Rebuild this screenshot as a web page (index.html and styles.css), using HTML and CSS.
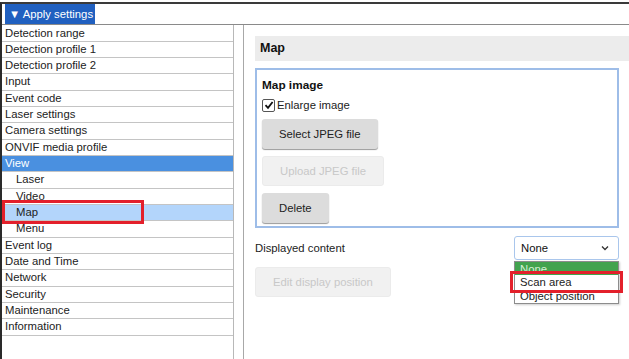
FILE: index.html
```html
<!DOCTYPE html>
<html>
<head>
<meta charset="utf-8">
<link rel="stylesheet" href="styles.css">
</head>
<body>
<div class="frame">
  <div class="topbar">
    <div class="apply">▼ Apply settings</div>
  </div>
  <div class="main">
    <div class="sidebar">
      <div class="item">Detection range</div>
      <div class="item">Detection profile 1</div>
      <div class="item">Detection profile 2</div>
      <div class="item">Input</div>
      <div class="item">Event code</div>
      <div class="item">Laser settings</div>
      <div class="item">Camera settings</div>
      <div class="item">ONVIF media profile</div>
      <div class="item active">View</div>
      <div class="item sub">Laser</div>
      <div class="item sub">Video</div>
      <div class="item sub current">Map</div>
      <div class="item sub">Menu</div>
      <div class="item">Event log</div>
      <div class="item">Date and Time</div>
      <div class="item">Network</div>
      <div class="item">Security</div>
      <div class="item">Maintenance</div>
      <div class="item">Information</div>
    </div>
    <div class="content">
      <div class="heading">Map</div>
      <div class="fieldset">
        <div class="legend">Map image</div>
        <label class="check"><span class="box"><svg width="10" height="10" viewBox="0 0 10 10"><path d="M1.5 5.2 L4 7.8 L8.6 2" fill="none" stroke="#111" stroke-width="1.8"/></svg></span>Enlarge image</label>
        <div class="btn">Select JPEG file</div>
        <div class="btn disabled">Upload JPEG file</div>
        <div class="btn">Delete</div>
      </div>
      <div class="row">
        <span>Displayed content</span>
        <div class="select">None<svg class="chev" width="8" height="6" viewBox="0 0 8 6"><path d="M1 1.5 L4 4.5 L7 1.5" fill="none" stroke="#333" stroke-width="1.3"/></svg></div>
      </div>
      <div class="btn disabled wide">Edit display position</div>
    </div>
  </div>
  <div class="dropdown">
    <div class="opt selected">None</div>
    <div class="opt">Scan area</div>
    <div class="opt">Object position</div>
  </div>
  <div class="mark mark-map"></div>
  <div class="mark mark-scan"></div>
</div>
</body>
</html>
```
FILE: styles.css
```css
html, body {
  margin: 0;
  padding: 0;
  background: #fff;
}
body {
  font-family: "Liberation Sans", Arial, sans-serif;
  font-size: 11.3px;
  color: #222;
}
.frame {
  position: relative;
  margin-top: 2px;
  height: 357px;
  box-sizing: border-box;
  border-top: 2px solid #3a3a3a;
  border-left: 2px solid #2a2a2a;
  display: flex;
  flex-direction: column;
  overflow: hidden;
}
.topbar {
  height: 20px;
  border-bottom: 1px solid #8a8a8a;
  display: flex;
  align-items: flex-end;
  padding-left: 3px;
}
.apply {
  background: #2060c0;
  color: #fff;
  height: 20px;
  line-height: 20px;
  padding: 0 2px 0 4px;
  font-size: 11.3px;
  white-space: nowrap;
}
.main {
  display: flex;
  flex: 1;
}
.sidebar {
  width: 231px;
  border-right: 1px solid #b8b8b8;
  padding-top: 0.5px;
}
.item {
  height: 16.33px;
  box-sizing: border-box;
  border-bottom: 1px solid #c4c4c4;
  padding-left: 3px;
  line-height: 15.8px;
  white-space: nowrap;
}
.item.sub {
  padding-left: 14px;
}
.item.active {
  background: #4a90e0;
  color: #fff;
}
.item.current {
  background: #b3d5fb;
}
.content {
  flex: 1;
  margin-left: 9px;
  border-left: 1px solid #a8a8a8;
  padding: 11px 0 0 11px;
}
.heading {
  background: #ececec;
  height: 25px;
  line-height: 25px;
  padding-left: 5px;
  font-weight: bold;
  font-size: 12.5px;
  color: #111;
}
.fieldset {
  margin-top: 7px;
  margin-right: 10px;
  border: 2px solid #9ebde8;
  padding: 8px 5px 3px 5px;
  display: flex;
  flex-direction: column;
  align-items: flex-start;
  gap: 7px;
}
.legend {
  font-weight: bold;
  font-size: 11.8px;
  color: #111;
  line-height: 14px;
}
.check {
  display: flex;
  align-items: center;
  gap: 2px;
  margin-top: -1px;
  line-height: 14px;
}
.box {
  width: 11px;
  height: 11px;
  border: 1px solid #555;
  border-radius: 2px;
  display: flex;
  align-items: center;
  justify-content: center;
  background: #fff;
}
.btn {
  height: 30px;
  line-height: 30px;
  padding: 0 17px;
  background: #dcdcdc;
  border-radius: 3px;
  box-shadow: 0 1px 1px #9a9a9a;
  color: #222;
  white-space: nowrap;
}
.btn.disabled {
  background: #f1f1f1;
  color: #c8c8c8;
  box-shadow: none;
  border: 1px solid #ebebeb;
  height: 28px;
  line-height: 28px;
}
.btn.wide {
  display: inline-block;
  padding: 0 17px;
  margin-top: 7px;
}
.row {
  display: flex;
  align-items: center;
  justify-content: space-between;
  margin-top: 8px;
  margin-right: 10px;
}
.select {
  width: 105px;
  height: 24px;
  box-sizing: border-box;
  border: 1px solid #a9c6ec;
  border-radius: 3px;
  padding: 0 6px;
  display: flex;
  align-items: center;
  justify-content: space-between;
  color: #111;
}
.chev {
  margin-right: 3px;
}
.dropdown {
  position: absolute;
  left: 512px;
  top: 257px;
  width: 105px;
  box-sizing: border-box;
  border: 1px solid #8c8c8c;
  background: #fff;
  box-shadow: 1px 1px 2px rgba(0,0,0,0.2);
}
.opt {
  height: 14px;
  line-height: 14px;
  padding-left: 5px;
  color: #222;
}
.opt.selected {
  background: #42a34e;
  color: #d6f0d6;
  height: 13px;
  line-height: 14px;
}
.mark {
  position: absolute;
  border: 3px solid #e3202b;
  box-sizing: border-box;
}
.mark-map {
  left: 0;
  top: 196px;
  width: 142px;
  height: 24px;
}
.mark-scan {
  left: 508px;
  top: 267px;
  width: 113px;
  height: 22px;
}
```
